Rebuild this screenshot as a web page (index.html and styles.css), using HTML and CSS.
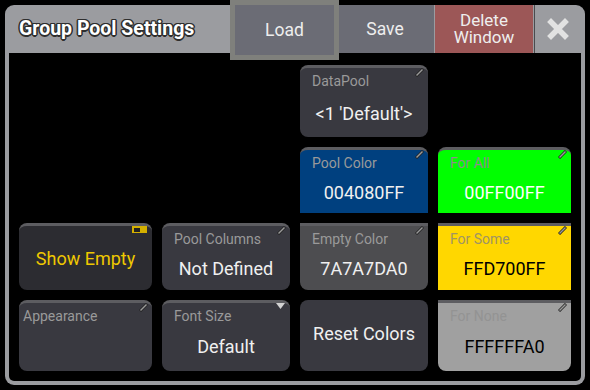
FILE: index.html
```html
<!DOCTYPE html>
<html lang="en">
<head>
    <meta charset="UTF-8">
    <title>Group Pool Settings</title>
    <link rel="stylesheet" href="styles.css">
</head>
<body>

    <div class="window">
        <div class="titlebar">
            <div class="title">Group Pool Settings</div>
            <div class="tb-btn load">Load</div>
            <div class="tb-btn save">Save</div>
            <div class="tb-btn delete"><span>Delete</span><span>Window</span></div>
            <div class="tb-close">
                <svg width="24" height="22" viewBox="0 0 24 22">
                    <path d="M5 4 L19 18 M19 4 L5 18" stroke="#e2e2e2" stroke-width="5.5" stroke-linecap="square"/>
                </svg>
            </div>
        </div>

        <div class="content">
            <div class="grid">
                <div class="cell strip c3 r1">
                    <span class="label">DataPool</span>
                    <span class="value">&lt;1 'Default'&gt;</span>
                    <svg class="pencil" width="9" height="9" viewBox="0 0 9 9"><path d="M1 8 L8 1" stroke="#222" stroke-width="3"/><path d="M1.5 7.5 L7.5 1.5" stroke="#9a9a9a" stroke-width="1.5"/></svg>
                </div>

                <div class="cell strip c3 r2 pool-color flat-bottom">
                    <span class="label">Pool Color</span>
                    <span class="value">004080FF</span>
                    <svg class="pencil" width="9" height="9" viewBox="0 0 9 9"><path d="M1 8 L8 1" stroke="#222" stroke-width="3"/><path d="M1.5 7.5 L7.5 1.5" stroke="#9a9a9a" stroke-width="1.5"/></svg>
                </div>
                <div class="cell strip c4 r2 for-all flat-bottom">
                    <span class="label">For All</span>
                    <span class="value">00FF00FF</span>
                    <svg class="pencil" width="9" height="9" viewBox="0 0 9 9"><path d="M1 8 L8 1" stroke="#222" stroke-width="3"/><path d="M1.5 7.5 L7.5 1.5" stroke="#9a9a9a" stroke-width="1.5"/></svg>
                </div>

                <div class="cell strip c1 r3 show-empty">
                    <span class="center-text">Show Empty</span>
                    <span class="toggle"><span class="knob"></span></span>
                </div>
                <div class="cell strip c2 r3">
                    <span class="label">Pool Columns</span>
                    <span class="value">Not Defined</span>
                    <svg class="pencil" width="9" height="9" viewBox="0 0 9 9"><path d="M1 8 L8 1" stroke="#222" stroke-width="3"/><path d="M1.5 7.5 L7.5 1.5" stroke="#9a9a9a" stroke-width="1.5"/></svg>
                </div>
                <div class="cell strip c3 r3 empty-color flat-top">
                    <span class="label">Empty Color</span>
                    <span class="value">7A7A7DA0</span>
                    <svg class="pencil" width="9" height="9" viewBox="0 0 9 9"><path d="M1 8 L8 1" stroke="#222" stroke-width="3"/><path d="M1.5 7.5 L7.5 1.5" stroke="#9a9a9a" stroke-width="1.5"/></svg>
                </div>
                <div class="cell strip c4 r3 for-some flat-top flat-bottom">
                    <span class="label">For Some</span>
                    <span class="value">FFD700FF</span>
                    <svg class="pencil" width="9" height="9" viewBox="0 0 9 9"><path d="M1 8 L8 1" stroke="#222" stroke-width="3"/><path d="M1.5 7.5 L7.5 1.5" stroke="#9a9a9a" stroke-width="1.5"/></svg>
                </div>

                <div class="cell strip c1 r4 appearance">
                    <span class="label">Appearance</span>
                    <svg class="pencil" width="9" height="9" viewBox="0 0 9 9"><path d="M1 8 L8 1" stroke="#222" stroke-width="3"/><path d="M1.5 7.5 L7.5 1.5" stroke="#9a9a9a" stroke-width="1.5"/></svg>
                </div>
                <div class="cell strip c2 r4">
                    <span class="label">Font Size</span>
                    <span class="value">Default</span>
                    <svg class="arrow" width="9" height="6" viewBox="0 0 9 6"><path d="M0 0 L9 0 L4.5 6 Z" fill="#d2d2d2"/></svg>
                </div>
                <div class="cell c3 r4 reset">
                    <span class="center-text">Reset Colors</span>
                </div>
                <div class="cell strip c4 r4 for-none flat-top">
                    <span class="label">For None</span>
                    <span class="value">FFFFFFA0</span>
                    <svg class="pencil" width="9" height="9" viewBox="0 0 9 9"><path d="M1 8 L8 1" stroke="#222" stroke-width="3"/><path d="M1.5 7.5 L7.5 1.5" stroke="#9a9a9a" stroke-width="1.5"/></svg>
                </div>
            </div>
        </div>
    </div>

</body>
</html>
```

FILE: styles.css
```css
body {
    margin: 0;
    background-color: #000;
    font-family: Roboto, "Liberation Sans", sans-serif;
}

.window {
    margin: 5px;
    width: 580px;
    height: 380px;
    box-sizing: border-box;
    padding: 0 4px 4px;
    background-color: #9b9ca0;
    border-radius: 9px;
    display: flex;
    flex-direction: column;
}

.titlebar {
    height: 48px;
    display: flex;
    align-items: stretch;
}

.title {
    flex: 1;
    padding-left: 10px;
    padding-bottom: 1px;
    display: flex;
    align-items: center;
    font-size: 19.5px;
    font-weight: bold;
    color: #fff;
    text-shadow: -1px -1px 0 #2e2e2e, 1px -1px 0 #2e2e2e, -1px 1px 0 #2e2e2e, 1px 1px 0 #2e2e2e,
                 0 -1.5px 0 #2e2e2e, 0 1.5px 0 #2e2e2e, -1.5px 0 0 #2e2e2e, 1.5px 0 0 #2e2e2e;
}

.tb-btn {
    display: flex;
    flex-direction: column;
    align-items: center;
    justify-content: center;
    background-color: #6b6c75;
    color: #eee;
    font-size: 17.5px;
    line-height: 18px;
}

.load {
    width: 99px;
    margin: -5px 0 -7px;
    border: 5px solid #7f807c;
    position: relative;
    z-index: 1;
}

.save {
    width: 92px;
    padding-right: 3px;
}

.delete {
    width: 98px;
    margin-left: 1px;
    padding-bottom: 1px;
    background-color: #9c5757;
    font-size: 17px;
    line-height: 17px;
}

.tb-close {
    width: 46px;
    margin-left: 1px;
    border-top-right-radius: 9px;
    display: flex;
    align-items: center;
    justify-content: center;
    background-color: #9b9ca0;
    border-left: 1px solid #4a4a4d;
}

.content {
    flex: 1;
    background-color: #000;
    border-radius: 0 0 5px 5px;
    padding: 12px 10px 0;
}

.grid {
    display: grid;
    grid-template-columns: 133px 128px 128px 133px;
    grid-template-rows: 72px 66px 67px 71px;
    column-gap: 10px;
    row-gap: 10px;
}

.c1 { grid-column: 1; }
.c2 { grid-column: 2; }
.c3 { grid-column: 3; }
.c4 { grid-column: 4; }
.r1 { grid-row: 1; }
.r2 { grid-row: 2; }
.r3 { grid-row: 3; }
.r4 { grid-row: 4; }

.cell {
    position: relative;
    box-sizing: border-box;
    background-color: #393940;
    border-radius: 8px;
    padding: 8px 12px 0;
    display: flex;
    flex-direction: column;
    color: #f0f0f0;
}

.strip {
    border-top: 3px solid #5d5d61;
    padding-top: 5px;
}

.flat-top {
    border-top-left-radius: 0;
    border-top-right-radius: 0;
}

.flat-bottom {
    border-bottom-left-radius: 0;
    border-bottom-right-radius: 0;
}

.label {
    font-size: 14px;
    line-height: 16px;
    color: #9a9a9a;
}

.value {
    font-size: 18px;
    line-height: 20px;
    margin-top: 12px;
    text-align: center;
}

.r1 .value {
    margin-top: 15px;
}

.r4 .value {
    margin-top: 13px;
}

.center-text {
    margin: auto;
    font-size: 18px;
    padding-bottom: 4px;
}

.pencil {
    position: absolute;
    top: 0;
    right: 4px;
}

.arrow {
    position: absolute;
    top: 0;
    right: 5px;
}

.toggle {
    position: absolute;
    top: 0;
    right: 5px;
    width: 15px;
    height: 7px;
    box-sizing: border-box;
    background-color: #d4b000;
    padding: 2px;
}

.knob {
    display: block;
    width: 6px;
    height: 4px;
    background-color: #222;
}

.show-empty {
    background-color: #2c2c31;
    color: #efc800;
}

.appearance {
    padding-left: 4px;
}

.pool-color {
    background-color: #00407f;
}

.for-all {
    background-color: #00ff00;
    color: #fff;
}

.for-all .label {
    color: #8c8c8c;
}

.empty-color {
    background-color: #4d4d50;
}

.for-some {
    background-color: #ffd700;
    color: #000;
}

.for-some .label {
    color: #a09464;
}

.for-none {
    background-color: #a0a0a0;
    color: #000;
}

.for-none .label {
    color: #939393;
}

.reset {
    padding: 0;
}
```
